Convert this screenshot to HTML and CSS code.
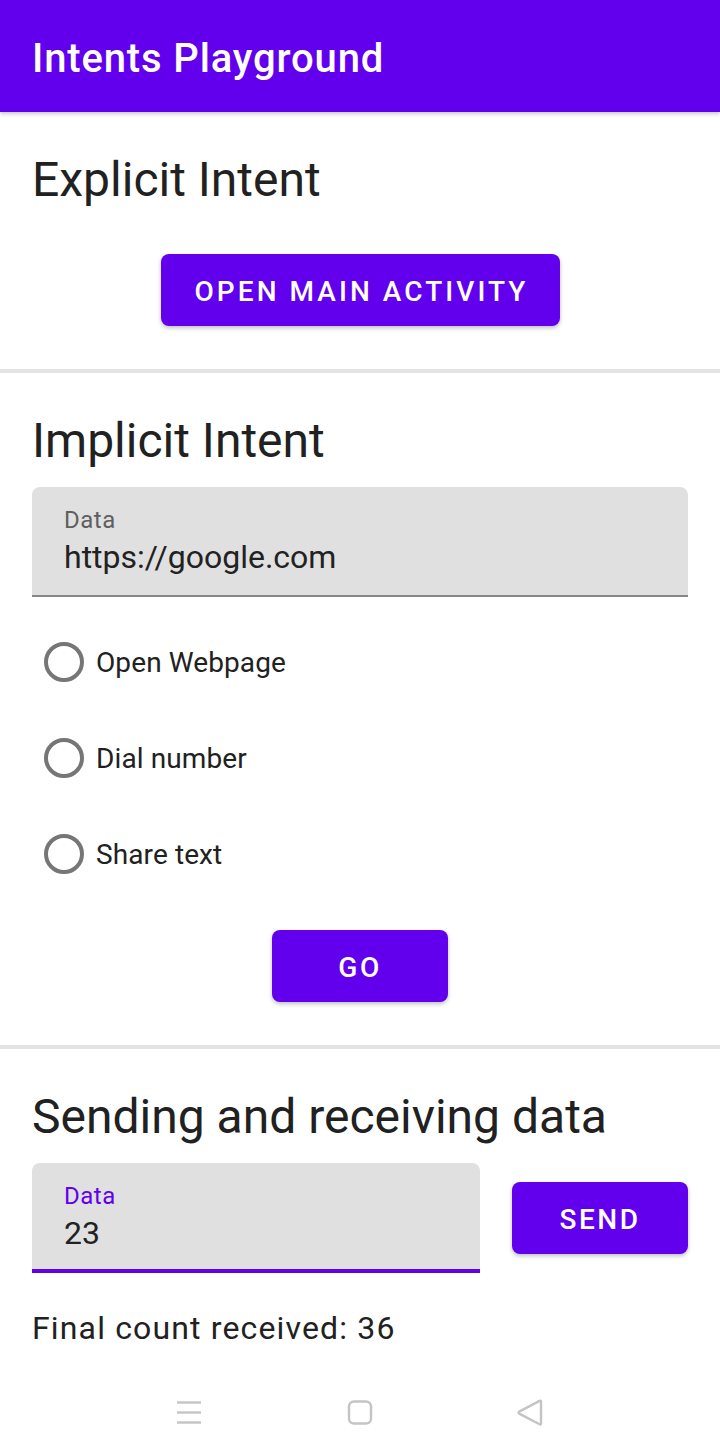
FILE: index.html
```html
<!DOCTYPE html>
<html>
<head>
<meta charset="utf-8">
<link rel="stylesheet" href="styles.css">
</head>
<body>
<div class="screen">
  <header class="appbar"><span class="appbar-title">Intents Playground</span></header>
  <main class="content">
    <section class="section">
      <h2 class="section-title">Explicit Intent</h2>
      <div class="btn-row"><button class="btn btn-wide">OPEN MAIN ACTIVITY</button></div>
    </section>
    <div class="divider"></div>
    <section class="section">
      <h2 class="section-title">Implicit Intent</h2>
      <div class="field">
        <span class="field-label">Data</span>
        <span class="field-value">https://google.com</span>
      </div>
      <div class="radios">
        <label class="radio"><span class="radio-circle"></span><span class="radio-text">Open Webpage</span></label>
        <label class="radio"><span class="radio-circle"></span><span class="radio-text">Dial number</span></label>
        <label class="radio"><span class="radio-circle"></span><span class="radio-text">Share text</span></label>
      </div>
      <div class="btn-row btn-row-go"><button class="btn btn-min">GO</button></div>
    </section>
    <div class="divider"></div>
    <section class="section section-last">
      <h2 class="section-title">Sending and receiving data</h2>
      <div class="send-row">
        <div class="field field-focused">
          <span class="field-label">Data</span>
          <span class="field-value">23</span>
        </div>
        <button class="btn btn-min">SEND</button>
      </div>
      <p class="final-count">Final count received: 36</p>
    </section>
  </main>
  <nav class="navbar">
    <svg class="nav-icon" width="28" height="28" viewBox="0 0 28 28"><g stroke="#c4c4c4" stroke-width="2.4" fill="none"><line x1="1" y1="3.5" x2="25" y2="3.5"/><line x1="1" y1="13.5" x2="25" y2="13.5"/><line x1="1" y1="23.5" x2="25" y2="23.5"/></g></svg>
    <svg class="nav-icon" width="28" height="28" viewBox="0 0 28 28"><rect x="3" y="2.5" width="22" height="22" rx="5" stroke="#c4c4c4" stroke-width="2.4" fill="none"/></svg>
    <svg class="nav-icon" width="28" height="28" viewBox="0 0 28 28"><path d="M25 2.5 L25 24.5 Q25 26 23.6 25.2 L3.2 14.6 Q2 13.5 3.2 12.6 L23.6 1.9 Q25 1.2 25 2.5 Z" stroke="#c4c4c4" stroke-width="2.4" fill="none" stroke-linejoin="round"/></svg>
  </nav>
</div>
</body>
</html>
```
FILE: styles.css
```css
* { box-sizing: border-box; }
html, body { margin: 0; padding: 0; background: #ffffff; }
body { font-family: Roboto, "Noto Sans", "Liberation Sans", sans-serif; color: #212121; }
.screen { width: 720px; height: 1456px; display: flex; flex-direction: column; overflow: hidden; }

.appbar {
  height: 112px; background: #6200ee; display: flex; align-items: center;
  padding: 4px 32px 0; box-shadow: 0 2px 4px rgba(0,0,0,0.22); position: relative; z-index: 1;
}
.appbar-title { color: #ffffff; font-size: 40px; font-weight: 500; letter-spacing: 0.85px; }

.content { flex: 1; display: flex; flex-direction: column; }
.section { padding: 40px 32px 43px; display: flex; flex-direction: column; }
.section + .divider + .section { padding-top: 40px; }
.section-last { padding-bottom: 0; }
.section-title { margin: 0; font-size: 48px; line-height: 56px; font-weight: 400; color: #212121; }

.divider { height: 4px; background: #e3e3e3; }

.btn-row { display: flex; justify-content: center; margin-top: 46px; }
.btn-row-go { margin-top: 28px; }
.btn {
  height: 72px; border: none; border-radius: 8px; background: #6200ee; color: #ffffff;
  font-family: Roboto, "Noto Sans", sans-serif; font-size: 28px; font-weight: 500;
  letter-spacing: 2.5px; padding: 2px 32px 0; box-shadow: 0 2px 4px rgba(0,0,0,0.25);
}
.btn-wide { letter-spacing: 3.05px; padding-left: 34px; padding-right: 31px; }
.btn-min { min-width: 176px; }

.field {
  margin-top: 18px; height: 110px; background: #e0e0e0; border-radius: 8px 8px 0 0;
  border-bottom: 2px solid #878787; padding: 19px 32px 0; display: flex; flex-direction: column;
}
.field-label { font-size: 24px; line-height: 28px; color: #5f5f5f; letter-spacing: 0.5px; }
.field-value { font-size: 32px; line-height: 40px; margin-top: 3px; color: #222222; }
.field-focused { border-bottom: 4px solid #6200ee; width: 448px; margin-top: 0; }
.field-focused .field-label { color: #6200ee; }

.radios { margin-top: 17px; display: flex; flex-direction: column; }
.radio { height: 96px; display: flex; align-items: center; padding-left: 12px; }
.radio-circle { width: 40px; height: 40px; border-radius: 50%; border: 4px solid #767676; flex: none; }
.radio-text { margin-left: 12px; font-size: 28px; color: #212121; letter-spacing: 0.1px; }

.send-row { margin-top: 18px; display: flex; align-items: center; gap: 32px; }

.final-count { margin: 35px 0 0; font-size: 32px; line-height: 40px; letter-spacing: 1.15px; color: #212121; }

.navbar { height: 86px; display: flex; justify-content: center; align-items: flex-start; padding-top: 29px; }
.nav-icon { margin: 0 71px; }
```
